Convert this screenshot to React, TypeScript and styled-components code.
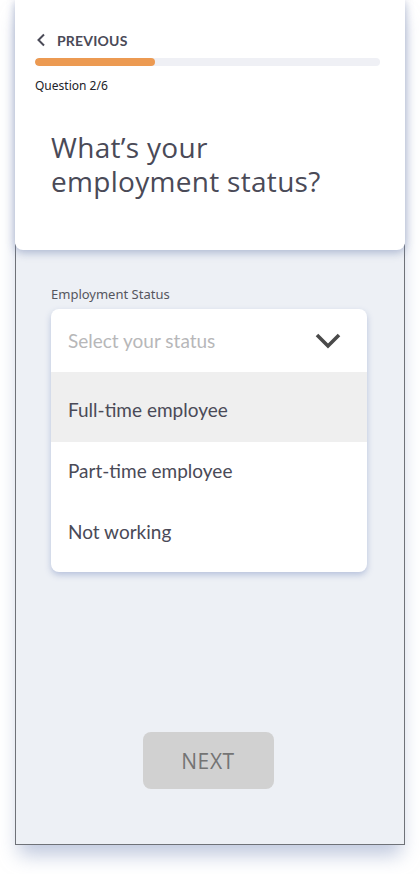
import React from "react";
import styled, { createGlobalStyle } from "styled-components";

const Global = createGlobalStyle`
  html, body { margin: 0; padding: 0; background: #ffffff; }
  body { font-family: "Lato", "Noto Sans", sans-serif; }
  * { box-sizing: border-box; }
`;

const Page = styled.div`
  width: 420px;
  padding: 0 15px 29px;
`;

const Frame = styled.div`
  display: flex;
  flex-direction: column;
  width: 390px;
  box-shadow: 0 14px 18px -4px rgba(150, 165, 200, 0.6);
`;

const HeaderCard = styled.header`
  position: relative;
  z-index: 2;
  height: 250px;
  background: #ffffff;
  border-radius: 0 0 8px 8px;
  box-shadow: 0 3px 8px rgba(120, 140, 185, 0.45), 0 0 10px rgba(120, 130, 160, 0.18);
  padding: 31px 25px 0 20px;
  display: flex;
  flex-direction: column;
`;

const BackLink = styled.button`
  display: flex;
  align-items: center;
  gap: 8px;
  border: 0;
  background: none;
  padding: 0;
  margin: 0;
  height: 18px;
  font-family: "Lato", sans-serif;
  font-weight: 700;
  font-size: 14px;
  letter-spacing: 0.2px;
  color: #4a4a57;
  cursor: pointer;
`;

const Track = styled.div`
  margin-top: 9px;
  height: 8px;
  border-radius: 4px;
  background: #eff0f5;
  overflow: hidden;
`;

const Fill = styled.div`
  height: 100%;
  border-radius: 4px;
  background: #ec9a52;
`;

const StepText = styled.div`
  margin-top: 12px;
  font-family: "Noto Sans", sans-serif;
  font-size: 12px;
  line-height: 16px;
  color: #222228;
`;

const Title = styled.h1`
  margin: 36px 0 0 16px;
  font-family: "Open Sans", sans-serif;
  font-weight: 400;
  font-size: 28px;
  line-height: 34px;
  letter-spacing: 0.3px;
  color: #4a4a57;
`;

const Body = styled.main`
  height: 601px;
  background: #edf0f5;
  border: 1px solid #6f7278;
  border-top: 0;
  margin-top: -6px;
  padding: 42px 37px 55px 35px;
  display: flex;
  flex-direction: column;
`;

const FieldLabel = styled.label`
  font-family: "Noto Sans", sans-serif;
  font-size: 13px;
  line-height: 16px;
  color: #55565e;
  margin-bottom: 7px;
`;

const Dropdown = styled.div`
  background: #ffffff;
  border-radius: 8px;
  box-shadow: 0 3px 6px rgba(120, 140, 190, 0.45);
  overflow: hidden;
  padding-bottom: 8px;
`;

const DropHeader = styled.div`
  height: 63px;
  display: flex;
  align-items: center;
  justify-content: space-between;
  padding: 0 26px 0 17px;
`;

const Placeholder = styled.span`
  font-family: "Lato", sans-serif;
  font-size: 19px;
  color: #b7b7b9;
`;

const Option = styled.div<{ $active?: boolean; $tall?: boolean }>`
  height: ${(p) => (p.$tall ? "70px" : "61px")};
  display: flex;
  align-items: center;
  padding: ${(p) => (p.$tall ? "4px 17px 0" : "0 17px 4px")};
  background: ${(p) => (p.$active ? "#efefef" : "#ffffff")};
  font-family: "Lato", sans-serif;
  font-size: 19px;
  color: #4a4a57;
`;

const NextButton = styled.button`
  margin: auto 2px 0 0;
  align-self: center;
  width: 131px;
  height: 57px;
  border: 0;
  border-radius: 8px;
  background: #d1d1d1;
  font-family: "Open Sans", sans-serif;
  font-weight: 500;
  font-size: 21px;
  letter-spacing: 0.6px;
  color: #747474;
`;

const options = ["Full-time employee", "Part-time employee", "Not working"];

export default function App() {
  const step = 2;
  const total = 6;
  return (
    <Page>
      <Global />
      <Frame>
        <HeaderCard>
          <BackLink>
            <svg width="14" height="14" viewBox="0 0 14 14" fill="none">
              <path d="M9 1.5 L3.5 7 L9 12.5" stroke="#4a4a57" strokeWidth="2" />
            </svg>
            PREVIOUS
          </BackLink>
          <Track>
            <Fill style={{ width: `${(step / total) * 100 + 1.5}%` }} />
          </Track>
          <StepText>
            Question {step}/{total}
          </StepText>
          <Title>
            What’s your
            <br />
            employment status?
          </Title>
        </HeaderCard>
        <Body>
          <FieldLabel>Employment Status</FieldLabel>
          <Dropdown>
            <DropHeader>
              <Placeholder>Select your status</Placeholder>
              <svg width="26" height="18" viewBox="0 0 26 18" fill="none">
                <path d="M2 3 L13 14 L24 3" stroke="#4a4a4a" strokeWidth="3.6" />
              </svg>
            </DropHeader>
            {options.map((o, i) => (
              <Option key={o} $active={i === 0} $tall={i === 0}>
                {o}
              </Option>
            ))}
          </Dropdown>
          <NextButton>NEXT</NextButton>
        </Body>
      </Frame>
    </Page>
  );
}
